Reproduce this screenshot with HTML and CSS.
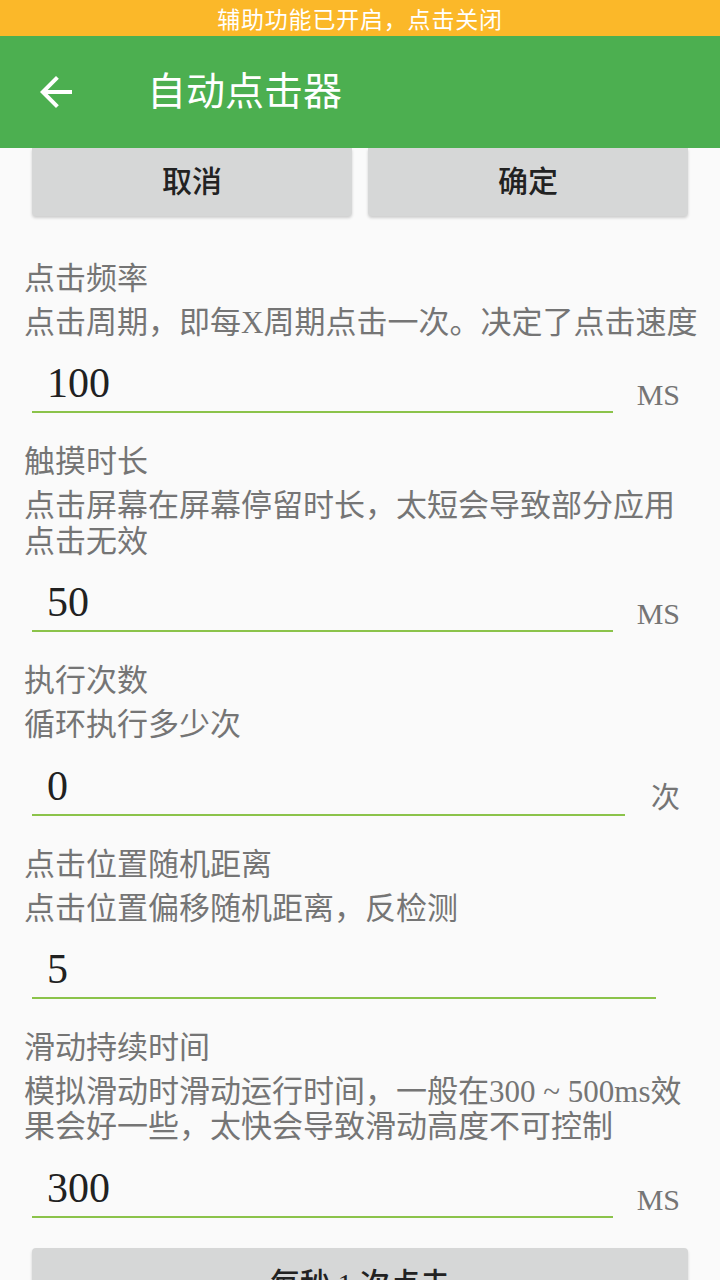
FILE: index.html
```html
<!DOCTYPE html>
<html lang="zh-CN">
<head>
<meta charset="utf-8">
<title>自动点击器</title>
<link rel="stylesheet" href="styles.css">
</head>
<body>
<div class="banner">辅助功能已开启，点击关闭</div>
<header class="appbar">
  <svg class="back" viewBox="0 0 24 24" width="48" height="48" aria-hidden="true">
    <path fill="#fff" d="M20 11H7.83l5.59-5.59L12 4l-8 8 8 8 1.41-1.41L7.83 13H20v-2z"/>
  </svg>
  <h1 class="title">自动点击器</h1>
</header>
<main class="content">
  <div class="actions">
    <button class="btn">取消</button>
    <button class="btn">确定</button>
  </div>

  <section class="field first">
    <div class="label">点击频率</div>
    <div class="desc">点击周期，即每X周期点击一次。决定了点击速度</div>
    <div class="input-row">
      <div class="input">100</div>
      <span class="unit">MS</span>
    </div>
  </section>

  <section class="field">
    <div class="label">触摸时长</div>
    <div class="desc">点击屏幕在屏幕停留时长，太短会导致部分应用点击无效</div>
    <div class="input-row">
      <div class="input">50</div>
      <span class="unit">MS</span>
    </div>
  </section>

  <section class="field">
    <div class="label">执行次数</div>
    <div class="desc">循环执行多少次</div>
    <div class="input-row">
      <div class="input">0</div>
      <span class="unit unit-cjk">次</span>
    </div>
  </section>

  <section class="field">
    <div class="label">点击位置随机距离</div>
    <div class="desc">点击位置偏移随机距离，反检测</div>
    <div class="input-row no-unit">
      <div class="input">5</div>
    </div>
  </section>

  <section class="field">
    <div class="label">滑动持续时间</div>
    <div class="desc">模拟滑动时滑动运行时间，一般在300 ~ 500ms效果会好一些，太快会导致滑动高度不可控制</div>
    <div class="input-row">
      <div class="input">300</div>
      <span class="unit">MS</span>
    </div>
  </section>

  <button class="btn wide">每秒 1 次点击</button>
</main>
</body>
</html>
```
FILE: styles.css
```css
html, body {
  margin: 0;
  padding: 0;
}
body {
  width: 720px;
  height: 1280px;
  overflow: hidden;
  background: #fafafa;
  font-family: "Liberation Serif", "Noto Sans CJK SC", serif;
}
.banner {
  height: 36px;
  line-height: 36px;
  background: #fbb829;
  color: #fff;
  text-align: center;
  font-family: "Noto Sans CJK SC", sans-serif;
  font-size: 23px;
  letter-spacing: 0.8px;
}
.appbar {
  height: 112px;
  background: #4caf50;
  display: flex;
  align-items: center;
  position: relative;
  z-index: 2;
}
.back {
  margin-left: 32px;
  width: 48px;
  height: 48px;
  flex: none;
}
.title {
  margin: 0 0 0 67px;
  font-family: "Noto Sans CJK SC", sans-serif;
  font-weight: 400;
  font-size: 39px;
  color: #fff;
  line-height: 48px;
  position: relative;
  top: -4px;
}
.content {
  display: flex;
  flex-direction: column;
}
.actions {
  display: flex;
  gap: 16px;
  padding: 0 32px;
}
.btn {
  border: none;
  background: #d6d7d7;
  color: #222;
  font-family: "Liberation Serif", "Noto Sans CJK SC", serif;
  font-size: 30px;
  font-weight: 500;
  padding: 0;
  border-radius: 0 0 4px 4px;
  box-shadow: 0 2px 3px rgba(0, 0, 0, 0.18);
}
.actions .btn {
  flex: 1;
  height: 68px;
  line-height: 62px;
}
.field {
  padding-top: 31px;
}
.field.first {
  padding-top: 45px;
}
.label, .desc {
  padding: 0 16px 0 24px;
  color: #757575;
  font-size: 31px;
}
.label {
  line-height: 36px;
}
.desc {
  margin-top: 8px;
  line-height: 35.4px;
}
.input-row {
  display: flex;
  padding: 0 40px 0 32px;
  margin-top: 17px;
}
.input-row.no-unit {
  padding-right: 64px;
}
.input {
  flex: 1;
  height: 54px;
  line-height: 52px;
  padding-left: 15px;
  border-bottom: 2px solid #8bc34a;
  color: #212121;
  font-size: 42px;
}
.unit {
  align-self: flex-end;
  margin-left: 24px;
  line-height: 36px;
  font-size: 30px;
  color: #757575;
}
.unit-cjk {
  margin-left: 26px;
  font-size: 29px;
}
.btn.wide {
  margin: 30px 32px 0;
  height: 72px;
  line-height: 72px;
  border-radius: 4px;
  flex: none;
}
```
